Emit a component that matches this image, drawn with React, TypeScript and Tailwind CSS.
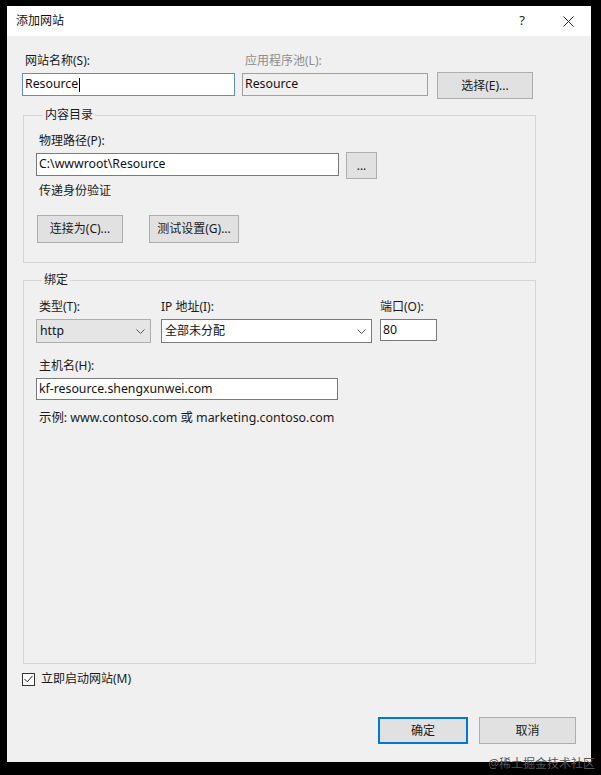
import React from "react";

const font = { fontFamily: '"Noto Sans", "Noto Sans CJK SC", sans-serif' };

function Chevron() {
  return (
    <svg width="9" height="5" viewBox="0 0 9 5" className="shrink-0">
      <path d="M0.5 0.5 L4.5 4.5 L8.5 0.5" fill="none" stroke="#555" strokeWidth="1" />
    </svg>
  );
}

function Label({ children, muted = false, className = "" }: { children: React.ReactNode; muted?: boolean; className?: string }) {
  return (
    <div className={`h-[16px] leading-[16px] ${muted ? "text-[#8d8d8d]" : "text-[#1a1a1a]"} ${className || "text-[12px]"}`}>
      {children}
    </div>
  );
}

function Btn({ children, className = "" }: { children: React.ReactNode; className?: string }) {
  return (
    <div className={`flex items-center justify-center border border-[#adadad] bg-[#e1e1e1] text-[12px] text-[#1a1a1a] ${className}`}>
      {children}
    </div>
  );
}

export default function App() {
  return (
    <div className="relative h-[775px] w-[601px] bg-black pl-[7px] pt-[6px]" style={font}>
      <div className="flex h-[756px] w-[584px] flex-col bg-[#f0f0f0]">
        {/* title bar */}
        <div className="flex h-[30px] items-center bg-white">
          <div className="flex-1 pl-[9px] text-[12px] text-[#111]">添加网站</div>
          <div className="flex h-[30px] w-[46px] items-center justify-center text-[13px] text-[#222]">?</div>
          <div className="flex h-[30px] w-[46px] items-center justify-center">
            <svg width="11" height="11" viewBox="0 0 11 11">
              <path d="M0.5 0.5 L10.5 10.5 M10.5 0.5 L0.5 10.5" stroke="#222" strokeWidth="1" />
            </svg>
          </div>
        </div>

        <div className="flex flex-1 flex-col pl-[15px] pt-[17px]">
          {/* site name row */}
          <div className="flex items-start">
            <div className="w-[213px]">
              <Label className="ml-[3px] text-[12px]">网站名称(S):</Label>
              <div className="mt-[4px] flex h-[23px] items-center border border-[#5b8fc6] bg-white pl-[2px] text-[12.3px] text-[#111]">
                Resource<span className="ml-[1px] inline-block h-[14px] w-[1px] bg-black" />
              </div>
            </div>
            <div className="ml-[7px] w-[186px]">
              <Label muted className="ml-[3px] text-[12px]">应用程序池(L):</Label>
              <div className="mt-[4px] flex h-[23px] items-center border border-[#a0a0a0] bg-[#f0f0f0] pl-[2px] text-[12.3px] text-[#111]">
                Resource
              </div>
            </div>
            <Btn className="ml-[9px] mt-[19px] h-[27px] w-[96px]">选择(E)...</Btn>
          </div>

          {/* content directory */}
          <fieldset className="ml-[1px] mt-[8px] w-[513px] border border-[#d5d5d5] px-[12px] pb-[19px]">
            <legend className="ml-[7px] px-[2px] text-[12px] leading-[16px] text-[#1a1a1a]">内容目录</legend>
            <Label className="ml-[3px] mt-[10px] text-[12px]">物理路径(P):</Label>
            <div className="mt-[4px] flex items-start">
              <div className="flex h-[23px] w-[303px] items-center border border-[#7a7a7a] bg-white pl-[2px] text-[12.3px] text-[#111]">
                C:\wwwroot\Resource
              </div>
              <Btn className="-mt-[1px] ml-[7px] h-[27px] w-[31px]">...</Btn>
            </div>
            <Label className="ml-[3px] mt-[4px] text-[12px]">传递身份验证</Label>
            <div className="mt-[16px] flex">
              <Btn className="ml-[1px] h-[28px] w-[86px]">连接为(C)...</Btn>
              <Btn className="ml-[26px] h-[28px] w-[90px]">测试设置(G)...</Btn>
            </div>
          </fieldset>

          {/* binding */}
          <fieldset className="ml-[1px] mt-[9px] w-[513px] border border-[#d5d5d5] px-[12px] pb-[237px]">
            <legend className="ml-[6px] px-[2px] text-[12px] leading-[16px] text-[#1a1a1a]">绑定</legend>
            <div className="mt-[11px] flex items-start">
              <div className="w-[115px]">
                <Label className="ml-[3px] text-[12px]">类型(T):</Label>
                <div className="mt-[4px] flex h-[24px] items-center justify-between border border-[#adadad] bg-[#e5e5e5] pl-[3px] pr-[5px] text-[12.3px] text-[#111]">
                  http
                  <Chevron />
                </div>
              </div>
              <div className="ml-[10px] w-[211px]">
                <Label className="text-[12px]">IP 地址(I):</Label>
                <div className="mt-[4px] flex h-[24px] items-center justify-between border border-[#7a7a7a] bg-white pl-[3px] pr-[5px] text-[12px] text-[#111]">
                  全部未分配
                  <Chevron />
                </div>
              </div>
              <div className="ml-[8px] w-[57px]">
                <Label className="text-[12px]">端口(O):</Label>
                <div className="mt-[4px] flex h-[22px] items-center border border-[#7a7a7a] bg-white pl-[2px] text-[12.3px] text-[#111]">
                  80
                </div>
              </div>
            </div>
            <Label className="ml-[3px] mt-[15px] text-[12px]">主机名(H):</Label>
            <div className="mt-[4px] flex h-[22px] w-[302px] items-center border border-[#7a7a7a] bg-white pl-[2px] text-[12.3px] text-[#111]">
              kf-resource.shengxunwei.com
            </div>
            <Label className="ml-[3px] mt-[10px] text-[12.4px]">示例: www.contoso.com 或 marketing.contoso.com</Label>
          </fieldset>

          {/* start immediately */}
          <div className="mt-[7px] flex h-[16px] items-center">
            <div className="flex h-[13px] w-[13px] items-center justify-center border border-[#333] bg-white">
              <svg width="9" height="8" viewBox="0 0 9 8">
                <path d="M0.5 4 L3.3 6.8 L8.5 0.8" fill="none" stroke="#222" strokeWidth="1" />
              </svg>
            </div>
            <span className="ml-[6px] text-[12px] text-[#1a1a1a]">立即启动网站(M)</span>
          </div>

          {/* footer buttons */}
          <div className="mt-[30px] flex justify-end pr-[15px]">
            <div className="flex h-[27px] w-[90px] items-center justify-center border-2 border-[#0078d7] bg-[#e1e1e1] text-[12px] text-[#1a1a1a]">
              确定
            </div>
            <Btn className="ml-[11px] h-[27px] w-[97px]">取消</Btn>
          </div>
        </div>
      </div>

      <div className="absolute bottom-[2px] right-[6px] text-[12px] text-[#555]">@稀土掘金技术社区</div>
    </div>
  );
}
